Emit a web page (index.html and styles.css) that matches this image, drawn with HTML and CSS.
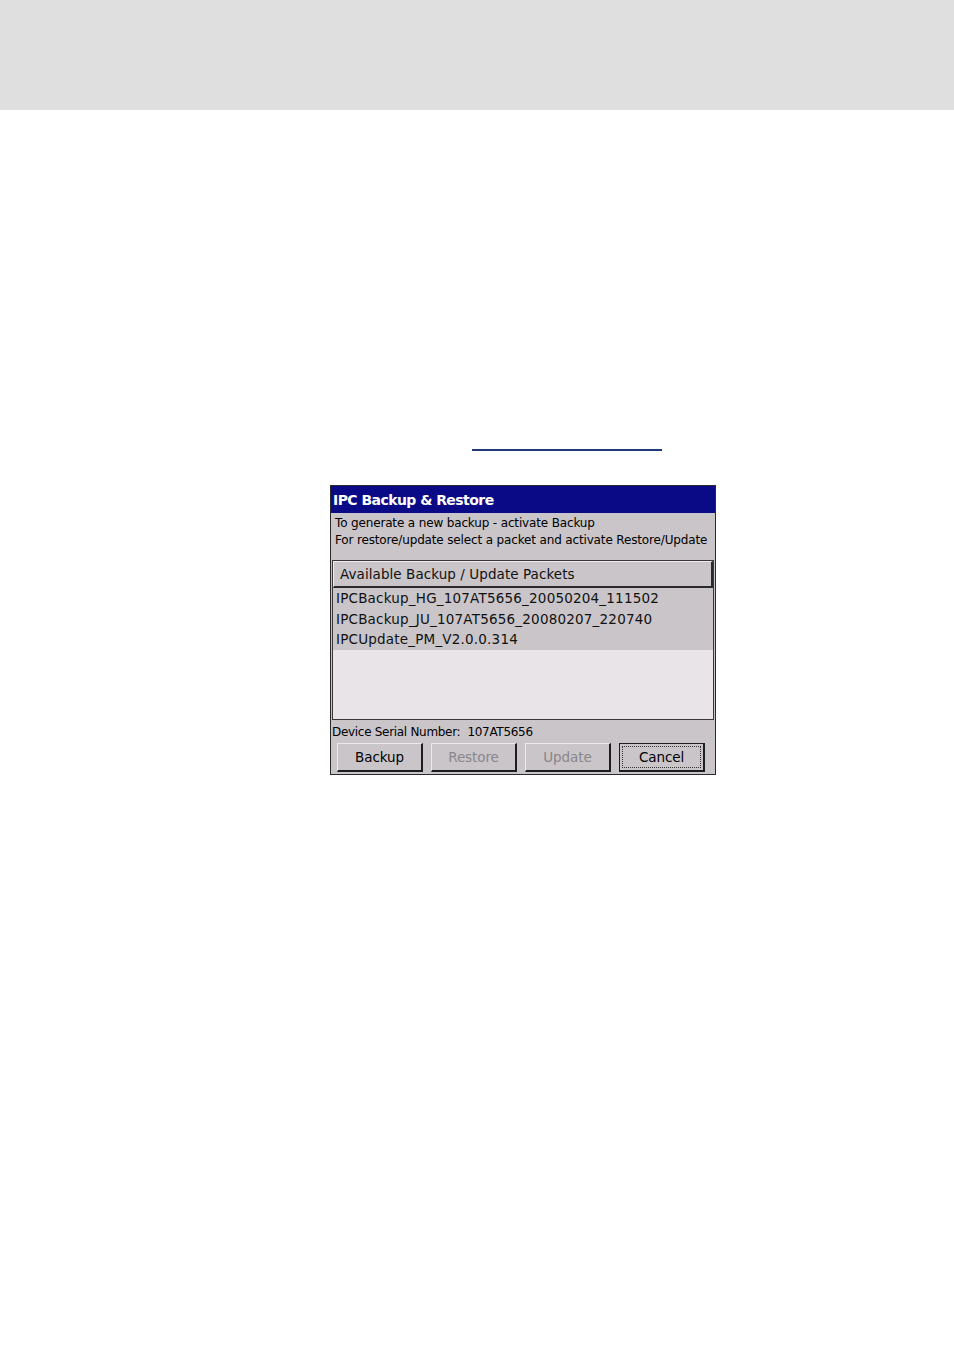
FILE: index.html
```html
<!DOCTYPE html>
<html>
<head>
<meta charset="utf-8">
<link rel="stylesheet" href="styles.css">
</head>
<body>
<header class="topbar"></header>
<main class="content">
  <div class="linkline"><span class="link"></span></div>
  <div class="dialog">
    <div class="titlebar">IPC Backup &amp; Restore</div>
    <div class="intro">
      <div>To generate a new backup - activate Backup</div>
      <div>For restore/update select a packet and activate Restore/Update</div>
    </div>
    <div class="listbox">
      <div class="listhead">Available Backup / Update Packets</div>
      <div class="items">
        <div class="item">IPCBackup_HG_107AT5656_20050204_111502</div>
        <div class="item">IPCBackup_JU_107AT5656_20080207_220740</div>
        <div class="item">IPCUpdate_PM_V2.0.0.314</div>
      </div>
      <div class="empty"></div>
    </div>
    <div class="serial">Device Serial Number:&nbsp; 107AT5656</div>
    <div class="buttons">
      <div class="btn">Backup</div>
      <div class="btn disabled">Restore</div>
      <div class="btn disabled">Update</div>
      <div class="btn default"><span class="focus">Cancel</span></div>
    </div>
  </div>
</main>
</body>
</html>
```

FILE: styles.css
```css
html, body {
  margin: 0;
  padding: 0;
  background: #ffffff;
}
body {
  width: 954px;
  height: 1350px;
  font-family: "DejaVu Sans", "Liberation Sans", sans-serif;
}
.topbar {
  height: 110px;
  background: #dfdfdf;
}
.content {
  display: flex;
  flex-direction: column;
}
.linkline {
  height: 341px;
  display: flex;
  align-items: flex-end;
  padding-left: 472px;
  box-sizing: border-box;
}
.link {
  display: block;
  width: 190px;
  height: 2px;
  background: #1f3a78;
}
.dialog {
  margin-top: 34px;
  margin-left: 330px;
  width: 386px;
  height: 290px;
  box-sizing: border-box;
  border: 1px solid #2a2a2a;
  background: #c9c5c9;
  display: flex;
  flex-direction: column;
  font-family: "DejaVu Sans", sans-serif;
  color: #000;
}
.titlebar {
  height: 27px;
  background: #0a0a86;
  color: #fff;
  font-weight: bold;
  font-size: 14px;
  line-height: 28px;
  padding-left: 2px;
  letter-spacing: -0.55px;
}
.intro {
  padding: 2px 0 0 4px;
  font-size: 12px;
  line-height: 17px;
  letter-spacing: -0.15px;
  height: 46px;
  box-sizing: border-box;
  white-space: nowrap;
}
.listbox {
  margin: 1px 1px 0 1px;
  height: 160px;
  box-sizing: border-box;
  border: 1px solid #3a363a;
  background: #e8e4e8;
  display: flex;
  flex-direction: column;
}
.listhead {
  height: 27px;
  box-sizing: border-box;
  border: 1px solid #eeeaee;
  border-right: 2px solid #2a2a2a;
  border-bottom: 2px solid #2a2a2a;
  background: #c9c5c9;
  font-size: 13.5px;
  line-height: 25px;
  padding-left: 6px;
  letter-spacing: 0.07px;
  color: #111;
}
.items {
  background: #c9c5c9;
}
.item {
  height: 20.5px;
  line-height: 20px;
  font-size: 13.5px;
  padding-left: 3px;
  letter-spacing: 0.2px;
  color: #111;
}
.empty {
  flex: 1;
}
.serial {
  font-size: 12px;
  height: 22px;
  box-sizing: border-box;
  padding-top: 3px;
  line-height: 19px;
  padding-left: 1px;
  letter-spacing: -0.3px;
}
.buttons {
  display: flex;
  gap: 8px;
  padding-left: 6px;
  padding-top: 1px;
}
.btn {
  width: 86px;
  height: 29px;
  box-sizing: border-box;
  border-top: 1px solid #eeeaee;
  border-left: 1px solid #eeeaee;
  border-right: 2px solid #1e1e1e;
  border-bottom: 2px solid #1e1e1e;
  background: #c9c5c9;
  font-size: 13.5px;
  text-align: center;
  line-height: 27px;
  letter-spacing: -0.1px;
  color: #000;
}
.btn.disabled {
  color: #8a868a;
}
.btn.default {
  border: 1px solid #1e1e1e;
  border-right: 2px solid #1e1e1e;
  border-bottom: 2px solid #1e1e1e;
  padding: 2px;
  line-height: 21px;
}
.focus {
  display: block;
  height: 100%;
  box-sizing: border-box;
  border: 1px dotted #333;
}
```
